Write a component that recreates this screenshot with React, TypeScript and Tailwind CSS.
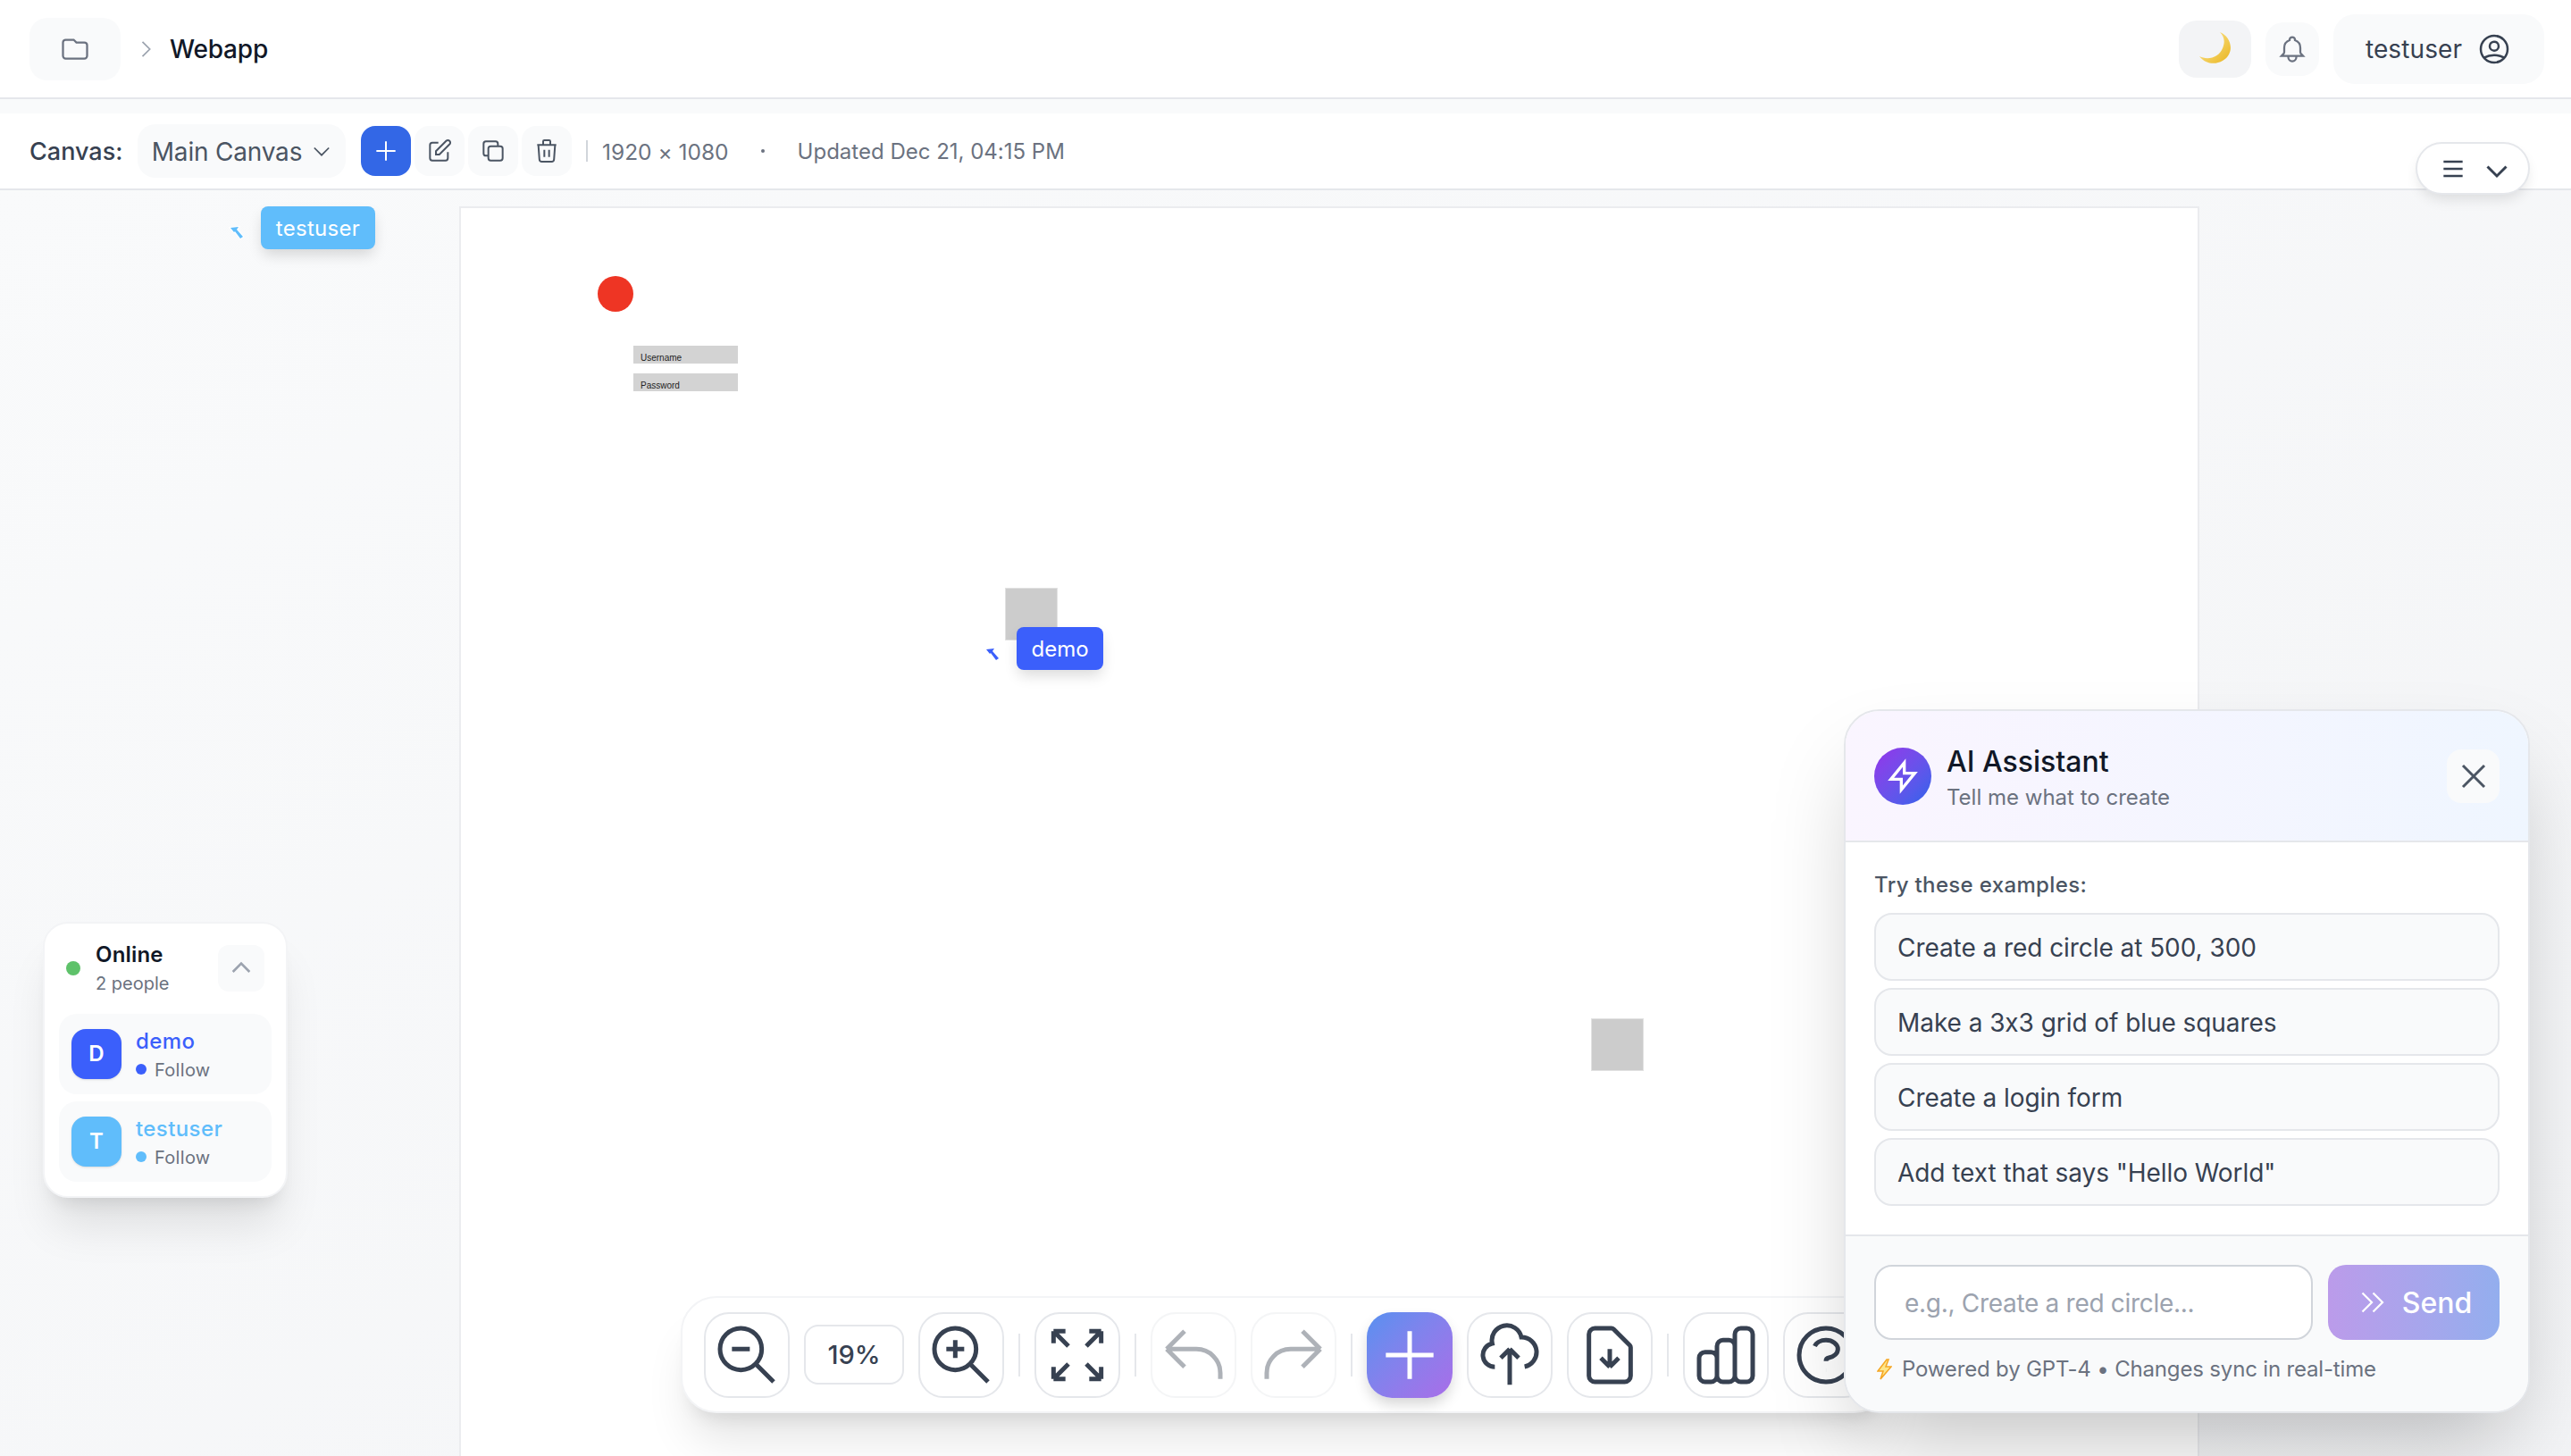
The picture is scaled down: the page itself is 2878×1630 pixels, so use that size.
import { useId } from "react";

// outline icon paths, drawn on a 24 box
const paths = {
  folder: "M3 7v10a2 2 0 002 2h14a2 2 0 002-2V9a2 2 0 00-2-2h-6l-2-2H5a2 2 0 00-2 2z",
  chevronRight: "M9 5l7 7-7 7",
  chevronDown: "M19 9l-7 7-7-7",
  chevronUp: "M5 15l7-7 7 7",
  bell: "M15 17h5l-1.405-1.405A2.032 2.032 0 0118 14.158V11a6.002 6.002 0 00-4-5.659V5a2 2 0 10-4 0v.341C7.67 6.165 6 8.388 6 11v3.159c0 .538-.214 1.055-.595 1.436L4 17h5m6 0v1a3 3 0 11-6 0v-1m6 0H9",
  user: "M5.121 17.804A13.937 13.937 0 0112 16c2.5 0 4.847.655 6.879 1.804M15 10a3 3 0 11-6 0 3 3 0 016 0zm6 2a9 9 0 11-18 0 9 9 0 0118 0z",
  plus: "M12 4v16m8-8H4",
  pencil: "M11 5H6a2 2 0 00-2 2v11a2 2 0 002 2h11a2 2 0 002-2v-5m-1.414-9.414a2 2 0 112.828 2.828L11.828 15H9v-2.828l8.586-8.586z",
  copy: "M8 16H6a2 2 0 01-2-2V6a2 2 0 012-2h8a2 2 0 012 2v2m-6 12h8a2 2 0 002-2v-8a2 2 0 00-2-2h-8a2 2 0 00-2 2v8a2 2 0 002 2z",
  trash: "M19 7l-.867 12.142A2 2 0 0116.138 21H7.862a2 2 0 01-1.995-1.858L5 7m5 4v6m4-6v6m1-10V4a1 1 0 00-1-1h-4a1 1 0 00-1 1v3M4 7h16",
  menu: "M4 6h16M4 12h16M4 18h16",
  zoomOut: "M21 21l-6-6m2-5a7 7 0 11-14 0 7 7 0 0114 0zM13 10H7",
  zoomIn: "M21 21l-6-6m2-5a7 7 0 11-14 0 7 7 0 0114 0zM10 7v3m0 0v3m0-3h3m-3 0H7",
  expand: "M4 8V4m0 0h4M4 4l5 5m11-1V4m0 0h-4m4 0l-5 5M4 16v4m0 0h4m-4 0l5-5m11 5l-5-5m5 5v-4m0 4h-4",
  undo: "M3 10h10a8 8 0 018 8v2M3 10l6 6m-6-6l6-6",
  redo: "M21 10H11a8 8 0 00-8 8v2m18-10l-6 6m6-6l-6-6",
  upload: "M7 16a4 4 0 01-.88-7.903A5 5 0 1115.9 6L16 6a5 5 0 011 9.9M15 13l-3-3m0 0l-3 3m3-3v12",
  download: "M12 10v6m0 0l-3-3m3 3l3-3m2 8H7a2 2 0 01-2-2V5a2 2 0 012-2h5.586a1 1 0 01.707.293l5.414 5.414a1 1 0 01.293.707V19a2 2 0 01-2 2z",
  chart: "M9 19v-6a2 2 0 00-2-2H5a2 2 0 00-2 2v6a2 2 0 002 2h2a2 2 0 002-2zm0 0V9a2 2 0 012-2h2a2 2 0 012 2v10m-6 0a2 2 0 002 2h2a2 2 0 002-2m0 0V5a2 2 0 012-2h2a2 2 0 012 2v14a2 2 0 01-2 2h-2a2 2 0 01-2-2z",
  help: "M8.228 9c.549-1.165 2.03-2 3.772-2 2.21 0 4 1.343 4 3 0 1.4-1.278 2.575-3.006 2.907-.542.104-.994.54-.994 1.093m0 3h.01M21 12a9 9 0 11-18 0 9 9 0 0118 0z",
  x: "M6 18L18 6M6 6l12 12",
  bolt: "M13 10V3L4 14h7v7l9-11h-7z",
  send: "M13 5l7 7-7 7M5 5l7 7-7 7",
};

type IconName = keyof typeof paths;

function Icon({ name, className, sw = 1.5 }: { name: IconName; className: string; sw?: number }) {
  return (
    <svg viewBox="0 0 24 24" fill="none" stroke="currentColor" strokeWidth={sw} className={`shrink-0 ${className}`}>
      <path d={paths[name]} />
    </svg>
  );
}

function Moon() {
  const id = useId();
  return (
    <svg viewBox="0 0 36 37" className="w-[36px] h-[37px]">
      <defs>
        <linearGradient id={id} x1="0" y1="0" x2="1" y2="1">
          <stop offset="0" stopColor="#fdeb9c" />
          <stop offset="1" stopColor="#e9b41f" />
        </linearGradient>
      </defs>
      <path d="M23 0C33 4 38 16 33 25C28 35 10 40 0 27C10 32 22 28 26 18C29 11 28 5 23 0Z" fill={`url(#${id})`} />
    </svg>
  );
}

function Cursor({ color, outline, className }: { color: string; outline?: boolean; className: string }) {
  return (
    <svg viewBox="-2 -2 19 18" className={`absolute w-[19px] h-[18px] ${className}`}>
      <path
        d="M0 1L9 0L7 3L14 11L11 13L5 5L4 6Z"
        fill={color}
        stroke={outline ? "#fff" : "none"}
        strokeWidth={outline ? 2 : 0}
        paintOrder="stroke"
      />
    </svg>
  );
}

function ToolButton({ name, muted }: { name: IconName; muted?: boolean }) {
  return (
    <button className={`w-[96px] h-[96px] shrink-0 flex items-center justify-center rounded-[28px] border-2 border-[#e5e7eb] text-[#374151] ${muted ? "opacity-40" : ""}`}>
      <Icon name={name} className="w-[80px] h-[80px]" />
    </button>
  );
}

function Sep() {
  return <div className="w-[2px] h-[48px] shrink-0 bg-[#e5e7eb]" />;
}

function Person({ letter, name, color, bg }: { letter: string; name: string; color: string; bg: string }) {
  return (
    <div className="h-[90px] flex items-center gap-[16px] pl-[14px] rounded-[20px] bg-[#f9fafb]">
      <div className={`w-[56px] h-[56px] flex items-center justify-center rounded-[16px] text-white text-[24px] font-semibold shadow-sm ${bg}`}>
        {letter}
      </div>
      <div>
        <div className={`pt-[1px] text-[24px] leading-[32px] font-medium tracking-[0.4px] ${color}`}>{name}</div>
        <div className="flex items-center gap-[9px] text-[20px] leading-[28px] tracking-[0.3px] text-[#6b7280]">
          <span className={`w-[12px] h-[12px] rounded-full ${bg}`} />
          <span className="pt-[2px]">Follow</span>
        </div>
      </div>
    </div>
  );
}

const examples = [
  "Create a red circle at 500, 300",
  "Make a 3x3 grid of blue squares",
  "Create a login form",
  'Add text that says "Hello World"',
];

export default function App() {
  return (
    <div className="relative w-[2878px] h-[1630px] overflow-hidden flex flex-col bg-[#f9fafb] font-[Inter,sans-serif] [font-feature-settings:'calt'_0]">
      {/* Header */}
      <header className="h-[111px] shrink-0 flex items-center justify-between pl-[33px] pr-[30px] bg-white border-b-2 border-[#e5e7eb]">
        <div className="flex items-center">
          <button className="w-[102px] h-[70px] flex items-center justify-center rounded-[20px] bg-[#f9fafb] text-[#6b7280]">
            <Icon name="folder" className="w-[36px] h-[36px]" sw={1.5} />
          </button>
          <Icon name="chevronRight" className="w-[28px] h-[28px] ml-[14px] text-[#9ca3af]" sw={1.5} />
          <span className="ml-[13px] pt-[1px] text-[28px] font-medium tracking-[-0.2px] text-[#111827]">Webapp</span>
        </div>
        <div className="flex items-center">
          <button className="w-[81px] h-[64px] flex items-center justify-center rounded-[20px] bg-[#f3f4f6]">
            <Moon />
          </button>
          <button className="w-[60px] h-[60px] ml-[16px] flex items-center justify-center rounded-[20px] bg-[#f9fafb] text-[#6b7280]">
            <Icon name="bell" className="w-[36px] h-[36px]" sw={1.5} />
          </button>
          <button className="w-[236px] h-[78px] ml-[16px] flex items-center justify-center gap-[16px] rounded-[24px] bg-[#f9fafb] text-[#374151]">
            <span className="pt-[1px] text-[28px] tracking-[0.1px]">testuser</span>
            <Icon name="user" className="w-[40px] h-[40px]" sw={1.5} />
          </button>
        </div>
      </header>

      {/* Canvas toolbar */}
      <div className="h-[86px] mt-[16px] shrink-0 flex items-center pl-[33px] bg-white border-b-2 border-[#e5e7eb]">
        <span className="w-[104px] pt-[2px] text-[27px] font-medium text-[#374151]">Canvas:</span>
        <button className="w-[233px] h-[60px] ml-[17px] flex items-center justify-center gap-[8px] pl-[3px] rounded-[20px] bg-[#f9fafb] text-[#4b5563]">
          <span className="pt-[2px] text-[28px] tracking-[-0.2px]">Main Canvas</span>
          <Icon name="chevronDown" className="w-[28px] h-[28px]" sw={1.5} />
        </button>
        <div className="ml-[17px] flex items-center gap-[4px]">
          <button className="w-[56px] h-[56px] flex items-center justify-center rounded-[16px] bg-[#3367e6] text-white">
            <Icon name="plus" className="w-[32px] h-[32px]" sw={1.5} />
          </button>
          {(["pencil", "copy", "trash"] as IconName[]).map((n) => (
            <button key={n} className="w-[56px] h-[56px] flex items-center justify-center rounded-[16px] bg-[#f9fafb] text-[#4b5563]">
              <Icon name={n} className="w-[32px] h-[32px]" sw={1.5} />
            </button>
          ))}
        </div>
        <div className="ml-[16px] w-[2px] h-[24px] bg-[#d1d5db]" />
        <span className="ml-[16px] pt-[2px] text-[24.5px] text-[#6b7280]">1920 × 1080</span>
        <span className="ml-[36px] w-[4px] h-[4px] rounded-full bg-[#6b7280]" />
        <span className="ml-[37px] pt-[2px] text-[24px] text-[#6b7280]">Updated Dec 21, 04:15 PM</span>
      </div>

      {/* Canvas area */}
      <main className="flex-1 pl-[514px] pt-[18px] bg-linear-to-br from-[#f9fafb] to-[#f3f4f6]">
        <div className="relative w-[1948px] h-[1500px] bg-white border-2 border-[#ebecef]">
          <div className="absolute left-[153px] top-[76px] w-[40px] h-[40px] rounded-full bg-[#ee3524]" />
          <div className="absolute left-[193px] top-[154px] w-[117px] h-[20px] overflow-hidden pl-[8px] pt-[8px] bg-[#d3d3d3] font-['Liberation_Sans',sans-serif] text-[10px] leading-[12px] text-[#222]">
            Username
          </div>
          <div className="absolute left-[193px] top-[185px] w-[117px] h-[20px] overflow-hidden pl-[8px] pt-[8px] bg-[#d3d3d3] font-['Liberation_Sans',sans-serif] text-[10px] leading-[12px] text-[#222]">
            Password
          </div>
          <div className="absolute left-[609px] top-[425px] w-[59px] h-[59px] bg-[#cccccc] border border-[#e2e2e2]" />
          <div className="absolute left-[1265px] top-[907px] w-[59px] h-[59px] bg-[#cccccc] border border-[#e2e2e2]" />
        </div>
      </main>

      {/* Live cursors */}
      <Cursor color="#60bdfb" outline className="left-[256px] top-[252px]" />
      <div className="absolute left-[292px] top-[231px] w-[128px] h-[48px] flex items-center justify-center pt-[2px] rounded-[8px] bg-[#60bdfb] text-white text-[24px] tracking-[0.3px] shadow-[0_8px_16px_-2px_rgba(0,0,0,0.15)]">
        testuser
      </div>
      <Cursor color="#3b5ffb" className="left-[1102px] top-[724px]" />
      <div className="absolute left-[1138px] top-[702px] w-[97px] h-[48px] flex items-center justify-center pt-[2px] rounded-[8px] bg-[#3b5ffb] text-white text-[24px] shadow-[0_8px_16px_-2px_rgba(0,0,0,0.15)]">
        demo
      </div>

      {/* Floating menu toggle */}
      <button className="absolute left-[2704px] top-[159px] w-[128px] h-[59px] flex items-center justify-center gap-[15px] pl-[7px] rounded-full bg-white border-2 border-[#e5e7eb] text-[#374151] shadow-[0_8px_16px_-4px_rgba(0,0,0,0.12)]">
        <Icon name="menu" className="w-[32px] h-[32px]" sw={2} />
        <Icon name="chevronDown" className="w-[36px] h-[36px] mt-[4px]" sw={2} />
      </button>

      {/* Online people */}
      <div className="absolute left-[48px] top-[1032px] w-[274px] h-[309px] px-[16px] pt-[24px] rounded-[28px] bg-white border-2 border-[#f3f4f6] shadow-[0_40px_50px_-10px_rgba(0,0,0,0.1),0_16px_20px_-12px_rgba(0,0,0,0.1)]">
        <div className="h-[52px] flex items-center pl-[8px] pr-[8px]">
          <span className="w-[16px] h-[16px] rounded-full bg-[#5ec26a]" />
          <div className="ml-[17px] flex-1 pt-[2px]">
            <div className="text-[24px] leading-[32px] font-semibold tracking-[0.2px] text-[#111827]">Online</div>
            <div className="text-[20px] leading-[32px] text-[#6b7280]">2 people</div>
          </div>
          <button className="w-[52px] h-[52px] flex items-center justify-center rounded-[12px] bg-[#f9fafb] text-[#9ca3af]">
            <Icon name="chevronUp" className="w-[32px] h-[32px]" sw={2} />
          </button>
        </div>
        <div className="mt-[25px] flex flex-col gap-[8px]">
          <Person letter="D" name="demo" color="text-[#3b5ffb]" bg="bg-[#3b5ffb]" />
          <Person letter="T" name="testuser" color="text-[#60bdfb]" bg="bg-[#60bdfb]" />
        </div>
      </div>

      {/* Bottom tool bar */}
      <div className="absolute left-[762px] top-[1451px] w-[1354px] h-[131px] flex items-center gap-[16px] pl-[24px] rounded-[40px] bg-white border-2 border-[#f3f4f6] shadow-[0_40px_50px_-10px_rgba(0,0,0,0.1),0_16px_20px_-12px_rgba(0,0,0,0.1)]">
        <ToolButton name="zoomOut" />
        <div className="w-[112px] h-[67px] shrink-0 flex items-center justify-center pt-[1px] rounded-[16px] border-2 border-[#e5e7eb] text-[29px] font-medium text-[#374151]">
          19%
        </div>
        <ToolButton name="zoomIn" />
        <Sep />
        <ToolButton name="expand" />
        <Sep />
        <ToolButton name="undo" muted />
        <ToolButton name="redo" muted />
        <Sep />
        <button className="w-[96px] h-[96px] shrink-0 flex items-center justify-center rounded-[28px] bg-linear-to-br from-[#5590f0] to-[#a86de8] text-white shadow-[0_8px_16px_-2px_rgba(0,0,0,0.18)]">
          <Icon name="plus" className="w-[80px] h-[80px]" />
        </button>
        <ToolButton name="upload" />
        <ToolButton name="download" />
        <Sep />
        <ToolButton name="chart" />
        <ToolButton name="help" />
      </div>

      {/* AI assistant */}
      <div className="absolute left-[2064px] top-[794px] w-[768px] h-[788px] flex flex-col overflow-hidden rounded-[40px] bg-white border-2 border-[#e5e7eb] shadow-[0_50px_100px_-24px_rgba(0,0,0,0.25)]">
        <div className="h-[147px] shrink-0 flex items-center px-[32px] bg-linear-to-r from-[#faf5ff] to-[#eff6ff] border-b-2 border-[#e5e7eb]">
          <div className="w-[64px] h-[64px] flex items-center justify-center rounded-full bg-linear-to-br from-[#9333ea] to-[#2563eb] text-white">
            <Icon name="bolt" className="w-[40px] h-[40px]" sw={2} />
          </div>
          <div className="ml-[17px] flex-1 pt-[4px]">
            <div className="text-[32px] leading-[44px] font-medium text-[#111827]">AI Assistant</div>
            <div className="text-[24px] leading-[36px] text-[#6b7280]">Tell me what to create</div>
          </div>
          <button className="w-[59px] h-[60px] flex items-center justify-center rounded-[16px] bg-[#f9fafb] text-[#4b5563]">
            <Icon name="x" className="w-[48px] h-[48px]" sw={1.5} />
          </button>
        </div>
        <div className="flex-1 px-[32px] pt-[32px]">
          <div className="text-[24px] leading-[32px] font-medium tracking-[0.35px] text-[#4b5563]">Try these examples:</div>
          <div className="mt-[15px] flex flex-col gap-[8px]">
            {examples.map((text) => (
              <button key={text} className="h-[76px] flex items-center pl-[24px] pt-[2px] rounded-[20px] bg-[#f9fafb] border-2 border-[#e5e7eb] text-[28px] tracking-[-0.06px] text-[#374151]">
                {text}
              </button>
            ))}
          </div>
        </div>
        <div className="h-[198px] shrink-0 px-[32px] pt-[32px] bg-[#f9fafb] border-t-2 border-[#e5e7eb]">
          <div className="flex gap-[17px]">
            <input
              readOnly
              placeholder="e.g., Create a red circle..."
              className="flex-1 min-w-0 h-[84px] pl-[32px] pt-[2px] rounded-[20px] bg-white border-2 border-[#d1d5db] text-[28px] tracking-[-0.3px] placeholder:text-[#9ca3af] outline-none"
            />
            <button className="w-[192px] h-[84px] flex items-center justify-center gap-[16px] rounded-[20px] bg-linear-to-r from-[#bb9bea] to-[#93aeee] text-white">
              <Icon name="send" className="w-[36px] h-[36px]" sw={1.5} />
              <span className="pt-[2px] text-[32px] font-medium">Send</span>
            </button>
          </div>
          <div className="mt-[17px] flex items-center text-[24px] leading-[32px] tracking-[-0.17px] text-[#6b7280]">
            <svg viewBox="0 0 17 24" className="w-[17px] h-[24px] ml-[3px]">
              <path d="M11 1L1 14H7L4 23L16 9H10L13 1Z" fill="#fde68a" stroke="#f5a623" strokeWidth={1.5} />
            </svg>
            <span className="ml-[11px]">Powered by GPT-4 • Changes sync in real-time</span>
          </div>
        </div>
      </div>
    </div>
  );
}
